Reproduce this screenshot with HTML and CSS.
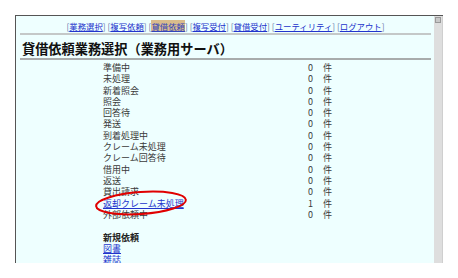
FILE: index.html
```html
<!DOCTYPE html>
<html lang="ja">
<head>
<meta charset="utf-8">
<link rel="stylesheet" href="styles.css">
</head>
<body>
<div class="window">
  <div class="content">
    <div class="nav">
      <span class="br">[</span><a href="#">業務選択</a><span class="br">]</span>
      <span class="br">[</span><a href="#">複写依頼</a><span class="br">]</span>
      <span class="br">[</span><a href="#" class="current">貸借依頼</a><span class="br">]</span>
      <span class="br">[</span><a href="#">複写受付</a><span class="br">]</span>
      <span class="br">[</span><a href="#">貸借受付</a><span class="br">]</span>
      <span class="br">[</span><a href="#">ユーティリティ</a><span class="br">]</span>
      <span class="br">[</span><a href="#">ログアウト</a><span class="br">]</span>
    </div>
    <div class="rule light"></div>
    <h1 class="title">貸借依頼業務選択（業務用サーバ）</h1>
    <div class="rule dark"></div>
    <div class="list">
      <div class="row"><span class="label">準備中</span><span class="num">0</span><span class="unit">件</span></div>
      <div class="row"><span class="label">未処理</span><span class="num">0</span><span class="unit">件</span></div>
      <div class="row"><span class="label">新着照会</span><span class="num">0</span><span class="unit">件</span></div>
      <div class="row"><span class="label">照会</span><span class="num">0</span><span class="unit">件</span></div>
      <div class="row"><span class="label">回答待</span><span class="num">0</span><span class="unit">件</span></div>
      <div class="row"><span class="label">発送</span><span class="num">0</span><span class="unit">件</span></div>
      <div class="row"><span class="label">到着処理中</span><span class="num">0</span><span class="unit">件</span></div>
      <div class="row"><span class="label">クレーム未処理</span><span class="num">0</span><span class="unit">件</span></div>
      <div class="row"><span class="label">クレーム回答待</span><span class="num">0</span><span class="unit">件</span></div>
      <div class="row"><span class="label">借用中</span><span class="num">0</span><span class="unit">件</span></div>
      <div class="row"><span class="label">返送</span><span class="num">0</span><span class="unit">件</span></div>
      <div class="row"><span class="label">貸出請求</span><span class="num">0</span><span class="unit">件</span></div>
      <div class="row"><a href="#" class="label link">返却クレーム未処理</a><span class="num">1</span><span class="unit">件</span></div>
      <div class="row"><span class="label">外部依頼中</span><span class="num">0</span><span class="unit">件</span></div>
    </div>
    <div class="newreq">
      <div class="newhead">新規依頼</div>
      <a href="#" class="newlink">図書</a>
      <a href="#" class="newlink">雑誌</a>
    </div>
  </div>
  <div class="scrollbar"><div class="upbtn"></div></div>
</div>
<svg class="mark" width="100" height="34" viewBox="0 0 100 34">
  <ellipse cx="48" cy="16" rx="45" ry="11" fill="none" stroke="#e00000" stroke-width="2" transform="rotate(-4 48 16)"/>
</svg>
</body>
</html>
```

FILE: styles.css
```css
html, body {
  margin: 0;
  padding: 0;
  background: #ffffff;
}
body {
  position: relative;
  width: 458px;
  height: 278px;
  overflow: hidden;
  font-family: "Noto Sans CJK JP", "Noto Sans", sans-serif;
}
.window {
  margin: 15px 0 0 15px;
  width: 427px;
  height: 247px;
  border-top: 1px solid #555555;
  border-left: 1px solid #555555;
  background: #eeffff;
  display: flex;
  overflow: hidden;
}
.content {
  flex: 1;
  padding: 0 3px 0 4px;
  overflow: hidden;
}
.nav {
  margin-top: 5px;
  height: 11px;
  font-size: 8.4px;
  line-height: 11px;
  text-align: center;
  white-space: nowrap;
  color: #6677aa;
}
.nav a {
  color: #2233cc;
  text-decoration: underline;
}
.nav a.current {
  background: #d9bc8c;
  color: #3344bb;
}
.br {
  color: #6677aa;
}
.rule {
  height: 2px;
}
.rule.light {
  margin-top: 1px;
  background: #c4c8c8;
}
.rule.dark {
  height: 2px;
  background: #a8acac;
}
.title {
  margin: 6px 0 1px 2px;
  font-size: 13.2px;
  line-height: 16px;
  font-weight: bold;
  color: #111111;
}
.list {
  margin-top: 2px;
  padding-left: 83px;
}
.row {
  display: grid;
  grid-template-columns: 194px 6px 20px;
  column-gap: 10px;
  height: 11.3px;
  font-size: 9px;
  line-height: 11.3px;
  color: #3a3a3a;
}
.row .num {
  text-align: right;
}
.link {
  color: #2233cc;
  text-decoration: underline;
}
.newreq {
  margin-top: 11.5px;
  padding-left: 83px;
  display: flex;
  flex-direction: column;
  font-size: 9px;
  line-height: 11.3px;
}
.newhead {
  font-weight: bold;
  color: #222222;
}
.newlink {
  color: #2233cc;
  text-decoration: underline;
  align-self: flex-start;
}
.scrollbar {
  width: 8px;
  background: #dedede;
  border-right: 1px solid #cfcfcf;
}
.upbtn {
  margin: 1px 0 0 1px;
  width: 6px;
  height: 6px;
  background: #c8c8c8;
  border: 1px solid #999999;
  box-sizing: border-box;
}
.mark {
  position: absolute;
  left: 93px;
  top: 187px;
}
```
